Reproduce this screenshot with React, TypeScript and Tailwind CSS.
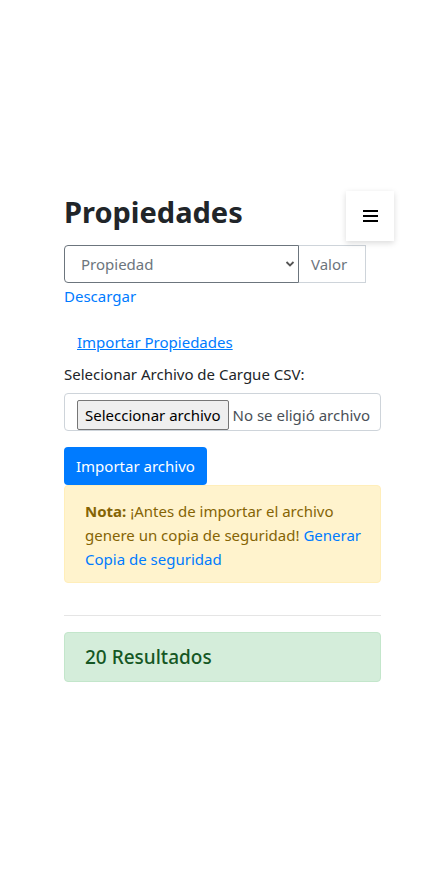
// Página de propiedades: descarga, importación CSV y resultados

import React from 'react';

const App: React.FC = () => {
    return (
        <div className="min-h-[888px] bg-white text-[#212529] relative" style={{ fontFamily: '"Noto Sans", "Open Sans", sans-serif' }}>
            {/* Botón de menú flotante */}
            <button className="absolute left-[346px] top-[191px] w-[48px] h-[50px] bg-white shadow-[0_2px_6px_rgba(0,0,0,0.15)] flex items-center justify-center">
                <span className="flex flex-col gap-[3px]">
                    <span className="block w-[15px] h-[2px] bg-black"></span>
                    <span className="block w-[15px] h-[2px] bg-black"></span>
                    <span className="block w-[15px] h-[2px] bg-black"></span>
                </span>
            </button>

            <div className="pt-[190px] pl-[64px] w-[381px]">
                <h1 className="text-[29px] font-bold leading-[44px] mb-[11px]">Propiedades</h1>

                <div className="flex">
                    <div className="relative w-[235px] h-[38px] border border-[#6c757d] rounded-l-[4px] flex items-center">
                        <span className="pl-[16px] text-[15px] text-[#6c757d]">Propiedad</span>
                        <svg className="absolute right-[3px] top-[14px]" width="10" height="8" viewBox="0 0 10 8">
                            <path d="M1.5 2 L5 5.5 L8.5 2" stroke="#555" strokeWidth="1.8" fill="none" />
                        </svg>
                    </div>
                    <div className="w-[67px] h-[38px] border border-l-0 border-[#ced4da] flex items-center pl-[12px] text-[15px] text-[#6c757d]">Valor</div>
                </div>
                <a className="block text-[#007bff] text-[15px] leading-[24px] mt-[1px]" href="#">Descargar</a>

                <a className="inline-block ml-[13px] mt-[22px] text-[#007bff] underline text-[15px] leading-[24px]" href="#">Importar Propiedades</a>
                <p className="text-[15px] leading-[24px] mt-[8px]">Selecionar Archivo de Cargue CSV:</p>

                <div className="mt-[7px] h-[38px] border border-[#ced4da] rounded-[4px] flex items-center pl-[12px]">
                    <span className="h-[30px] px-[7px] mt-[6px] bg-[#efefef] border border-[#767676] rounded-[2px] text-[15px] text-black flex items-center">Seleccionar archivo</span>
                    <span className="ml-[4px] text-[15px] text-[#495057] whitespace-nowrap mt-[6px]">No se eligió archivo</span>
                </div>

                <button className="mt-[16px] h-[38px] px-[12px] bg-[#007bff] text-white text-[15px] rounded-[4px]">Importar archivo</button>

                <div className="bg-[#fff3cd] border border-[#ffeeba] rounded-[4px] text-[#856404] text-[15px] leading-[24px] pl-[20px] pr-[18px] pt-[13px] pb-[11px]">
                    <strong className="font-bold">Nota:</strong> ¡Antes de importar el archivo genere un copia de seguridad! <a className="text-[#007bff]" href="#">Generar Copia de seguridad</a>
                </div>

                <hr className="mt-[32px] border-t border-[#e5e5e5]" />

                <div className="mt-[16px] h-[50px] bg-[#d4edda] border border-[#c3e6cb] rounded-[4px] flex items-center pl-[20px]">
                    <span className="text-[19px] font-medium text-[#155724]">20 Resultados</span>
                </div>
            </div>
        </div>
    );
};

export default App;
